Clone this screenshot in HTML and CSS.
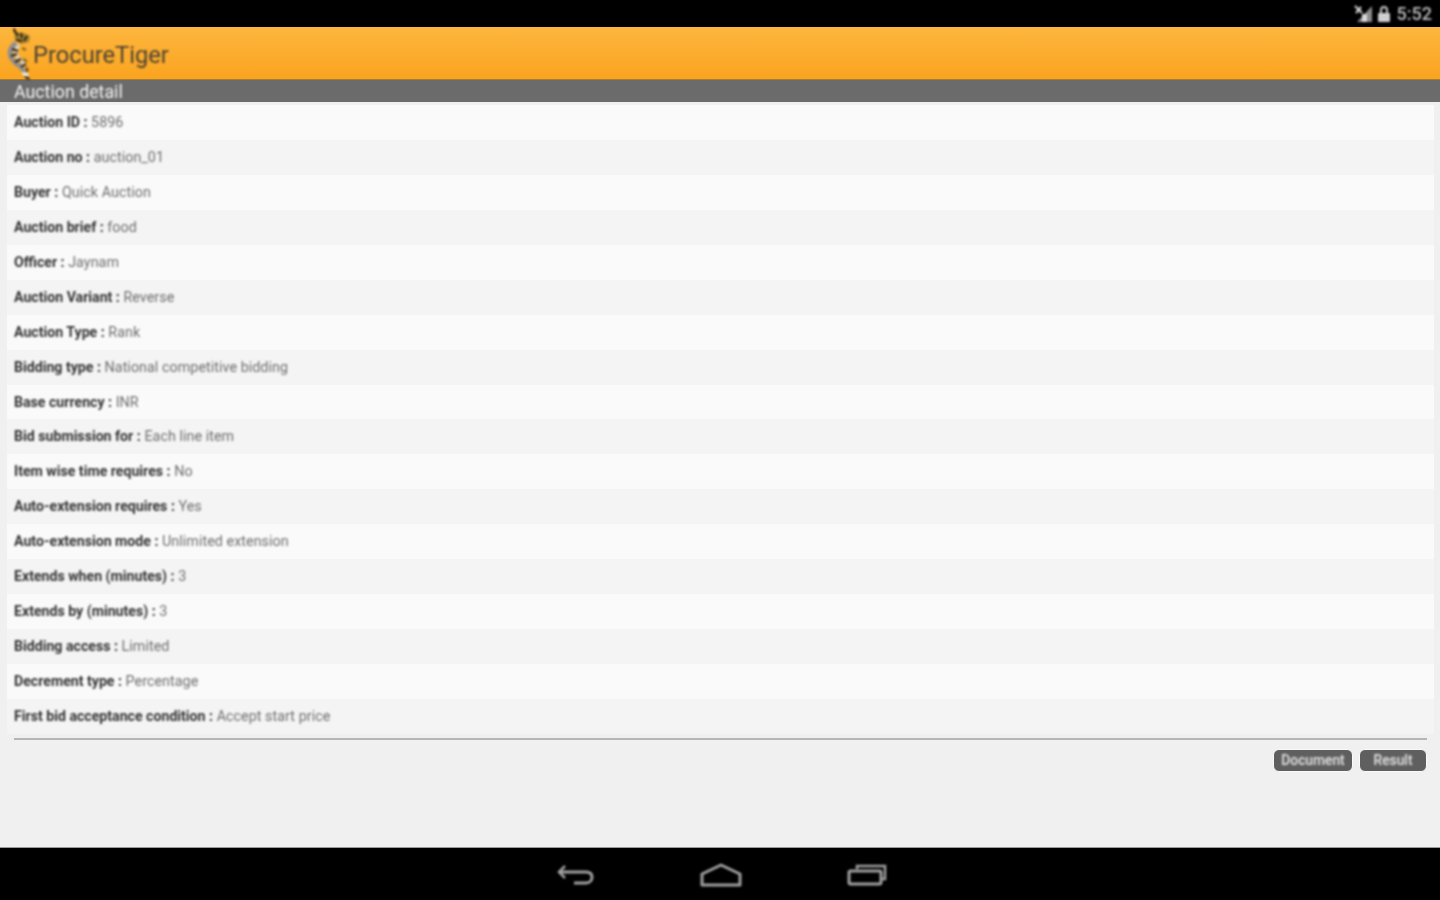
FILE: index.html
```html
<!doctype html>
<html lang="en">
  <head>
    <meta charset="UTF-8" />
    <title>ProcureTiger</title>
    <link rel="stylesheet" href="styles.css">
  </head>
  <body>
    <div class="status-bar">
      <svg class="soft" width="20" height="18" viewBox="0 0 20 18">
        <path d="M19 1v16H4z" fill="#8c8c8c" />
        <path d="M2 1l7 7M8 2L3 8" stroke="#d8d8d8" stroke-width="2" />
        <path d="M9 9h5v8H9z" fill="#d8d8d8" />
      </svg>
      <svg class="soft" width="14" height="18" viewBox="0 0 14 18">
        <path d="M4 8V5a3 3 0 0 1 6 0v3" fill="none" stroke="#c8c8c8" stroke-width="2" />
        <rect x="1" y="8" width="12" height="9" rx="1" fill="#d0d0d0" />
      </svg>
      <span class="clock soft">5:52</span>
    </div>

    <div class="app-header">
      <svg class="logo soft" width="26" height="54" viewBox="0 0 26 54">
        <path d="M7 1l2 4-3 1z" fill="#1d1a14" />
        <path d="M7 6l10 1 6 3-1 6-8 2-6-4z" fill="#a87f2c" />
        <path d="M8 5l3 5M14 7l1 5M20 10l-3 5M9 14l6 1" stroke="#2a251a" stroke-width="2" fill="none" />
        <path d="M9 17C4 21 2 26 4 31c2 4 5 7 9 9 2 2 3 4 5 6" fill="none" stroke="#8f8f8f" stroke-width="5" />
        <path d="M12 19c-3 3-4 7-2 11 2 3 6 5 8 9" fill="none" stroke="#d6d6d6" stroke-width="3" />
        <path d="M5 23l6 2M4 30l6-2M8 36l6-3M14 41l5-3" stroke="#262219" stroke-width="2" fill="none" />
        <path d="M15 22l4 2M16 33l4 3" stroke="#9a741f" stroke-width="3" fill="none" />
        <path d="M19 40l3 4-3 3z" fill="#5f4a1c" />
        <path d="M14 46l7 1 1 4-5-1z" fill="#ececec" />
        <path d="M17 50l5 1 1 3-4-1z" fill="#26221a" />
      </svg>
      <span class="brand soft">ProcureTiger</span>
    </div>
    <div class="sub-header"><span class="soft">Auction detail</span></div>

    <main class="content">
      <ul class="detail-list">
        <li><span class="soft"><b>Auction ID :</b> 5896</span></li>
        <li><span class="soft"><b>Auction no :</b> auction_01</span></li>
        <li><span class="soft"><b>Buyer :</b> Quick Auction</span></li>
        <li><span class="soft"><b>Auction brief :</b> food</span></li>
        <li><span class="soft"><b>Officer :</b> Jaynam</span></li>
        <li><span class="soft"><b>Auction Variant :</b> Reverse</span></li>
        <li><span class="soft"><b>Auction Type :</b> Rank</span></li>
        <li><span class="soft"><b>Bidding type :</b> National competitive bidding</span></li>
        <li><span class="soft"><b>Base currency :</b> INR</span></li>
        <li><span class="soft"><b>Bid submission for :</b> Each line item</span></li>
        <li><span class="soft"><b>Item wise time requires :</b> No</span></li>
        <li><span class="soft"><b>Auto-extension requires :</b> Yes</span></li>
        <li><span class="soft"><b>Auto-extension mode :</b> Unlimited extension</span></li>
        <li><span class="soft"><b>Extends when (minutes) :</b> 3</span></li>
        <li><span class="soft"><b>Extends by (minutes) :</b> 3</span></li>
        <li><span class="soft"><b>Bidding access :</b> Limited</span></li>
        <li><span class="soft"><b>Decrement type :</b> Percentage</span></li>
        <li><span class="soft"><b>First bid acceptance condition :</b> Accept start price</span></li>
      </ul>
      <div class="divider"></div>
      <div class="actions">
        <button class="btn btn-doc"><span class="soft">Document</span></button>
        <button class="btn btn-result"><span class="soft">Result</span></button>
      </div>
    </main>

    <div class="nav-bar">
      <svg class="soft" width="40" height="26" viewBox="0 0 40 26">
        <path d="M9 3L3 9l6 6" fill="none" stroke="#a0a0a0" stroke-width="2.5" />
        <path d="M3 9h27c4 0 6 2 6 5s-2 6-6 6H18" fill="none" stroke="#a0a0a0" stroke-width="3" />
      </svg>
      <svg class="soft" width="42" height="26" viewBox="0 0 42 26">
        <path d="M2 22V11L21 2l19 9v11z" fill="none" stroke="#a0a0a0" stroke-width="3" stroke-linejoin="round" />
      </svg>
      <svg class="soft" width="42" height="26" viewBox="0 0 42 26">
        <path d="M11 6V3h28v13h-4" fill="none" stroke="#a0a0a0" stroke-width="2.5" />
        <rect x="3" y="8" width="32" height="13" rx="1.5" fill="none" stroke="#a0a0a0" stroke-width="3" />
      </svg>
    </div>
  </body>
</html>
```

FILE: styles.css
```css
body {
  margin: 0;
  width: 1440px;
  height: 900px;
  overflow: hidden;
  display: flex;
  flex-direction: column;
  background-color: #f0f0f0;
  font-family: Roboto, "Liberation Sans", sans-serif;
}
/* the reference is an upscaled capture, so text and icons are a bit soft */
.soft {
  filter: blur(0.8px);
}
.status-bar {
  height: 27px;
  flex: none;
  background-color: #000;
  display: flex;
  align-items: center;
  justify-content: flex-end;
  gap: 4px;
  padding-right: 8px;
}
.clock {
  color: #bdbdbd;
  font-size: 18px;
  font-weight: 500;
  margin-left: 2px;
}
.app-header {
  height: 52px;
  flex: none;
  display: flex;
  align-items: center;
  background: linear-gradient(#fdb63e, #faa41f);
  border-bottom: 1px solid #a97c2c;
}
.logo {
  flex: none;
  margin-left: 7px;
  margin-top: -1px;
}
.brand {
  padding-top: 4px;
  color: #4a4234;
  font-size: 23.7px;
}
.sub-header {
  height: 22px;
  flex: none;
  padding-left: 14px;
  line-height: 23px;
  background-color: #6b6b6b;
  color: #f4f4f4;
  font-size: 17.8px;
}
.content {
  flex: 1;
  padding: 3px 6px 0 7px;
}
.detail-list {
  list-style: none;
  margin: 0;
  padding: 0;
}
.detail-list li {
  height: 34.94px;
  line-height: 34.94px;
  padding-left: 7px;
  font-size: 14.3px;
  letter-spacing: 0.05px;
  color: #6e6e6e;
  background-color: #f4f4f4;
}
.detail-list li:nth-child(odd) {
  background-color: #fafafa;
}
.detail-list b {
  font-size: 14.15px;
  letter-spacing: 0;
  color: #333;
}
.divider {
  height: 2px;
  margin: 4px 7px 0;
  background-color: #b5b5b5;
}
.actions {
  display: flex;
  justify-content: flex-end;
  gap: 6px;
  margin-top: 9px;
  padding-right: 7px;
}
.btn {
  height: 23px;
  padding: 0;
  border: 1px solid #fafafa;
  border-radius: 6px;
  background-color: #5f5f5f;
  color: #e6e6e6;
  font-family: inherit;
  font-size: 13.8px;
  font-weight: 500;
}
.btn-doc {
  width: 80px;
}
.btn-result {
  width: 68px;
}
.nav-bar {
  height: 53px;
  flex: none;
  background-color: #000;
  border-top: 1px solid #9a9a9a;
  box-sizing: border-box;
  display: flex;
  align-items: center;
  justify-content: center;
  gap: 104px;
  padding-top: 4px;
  padding-left: 3px;
}
```
